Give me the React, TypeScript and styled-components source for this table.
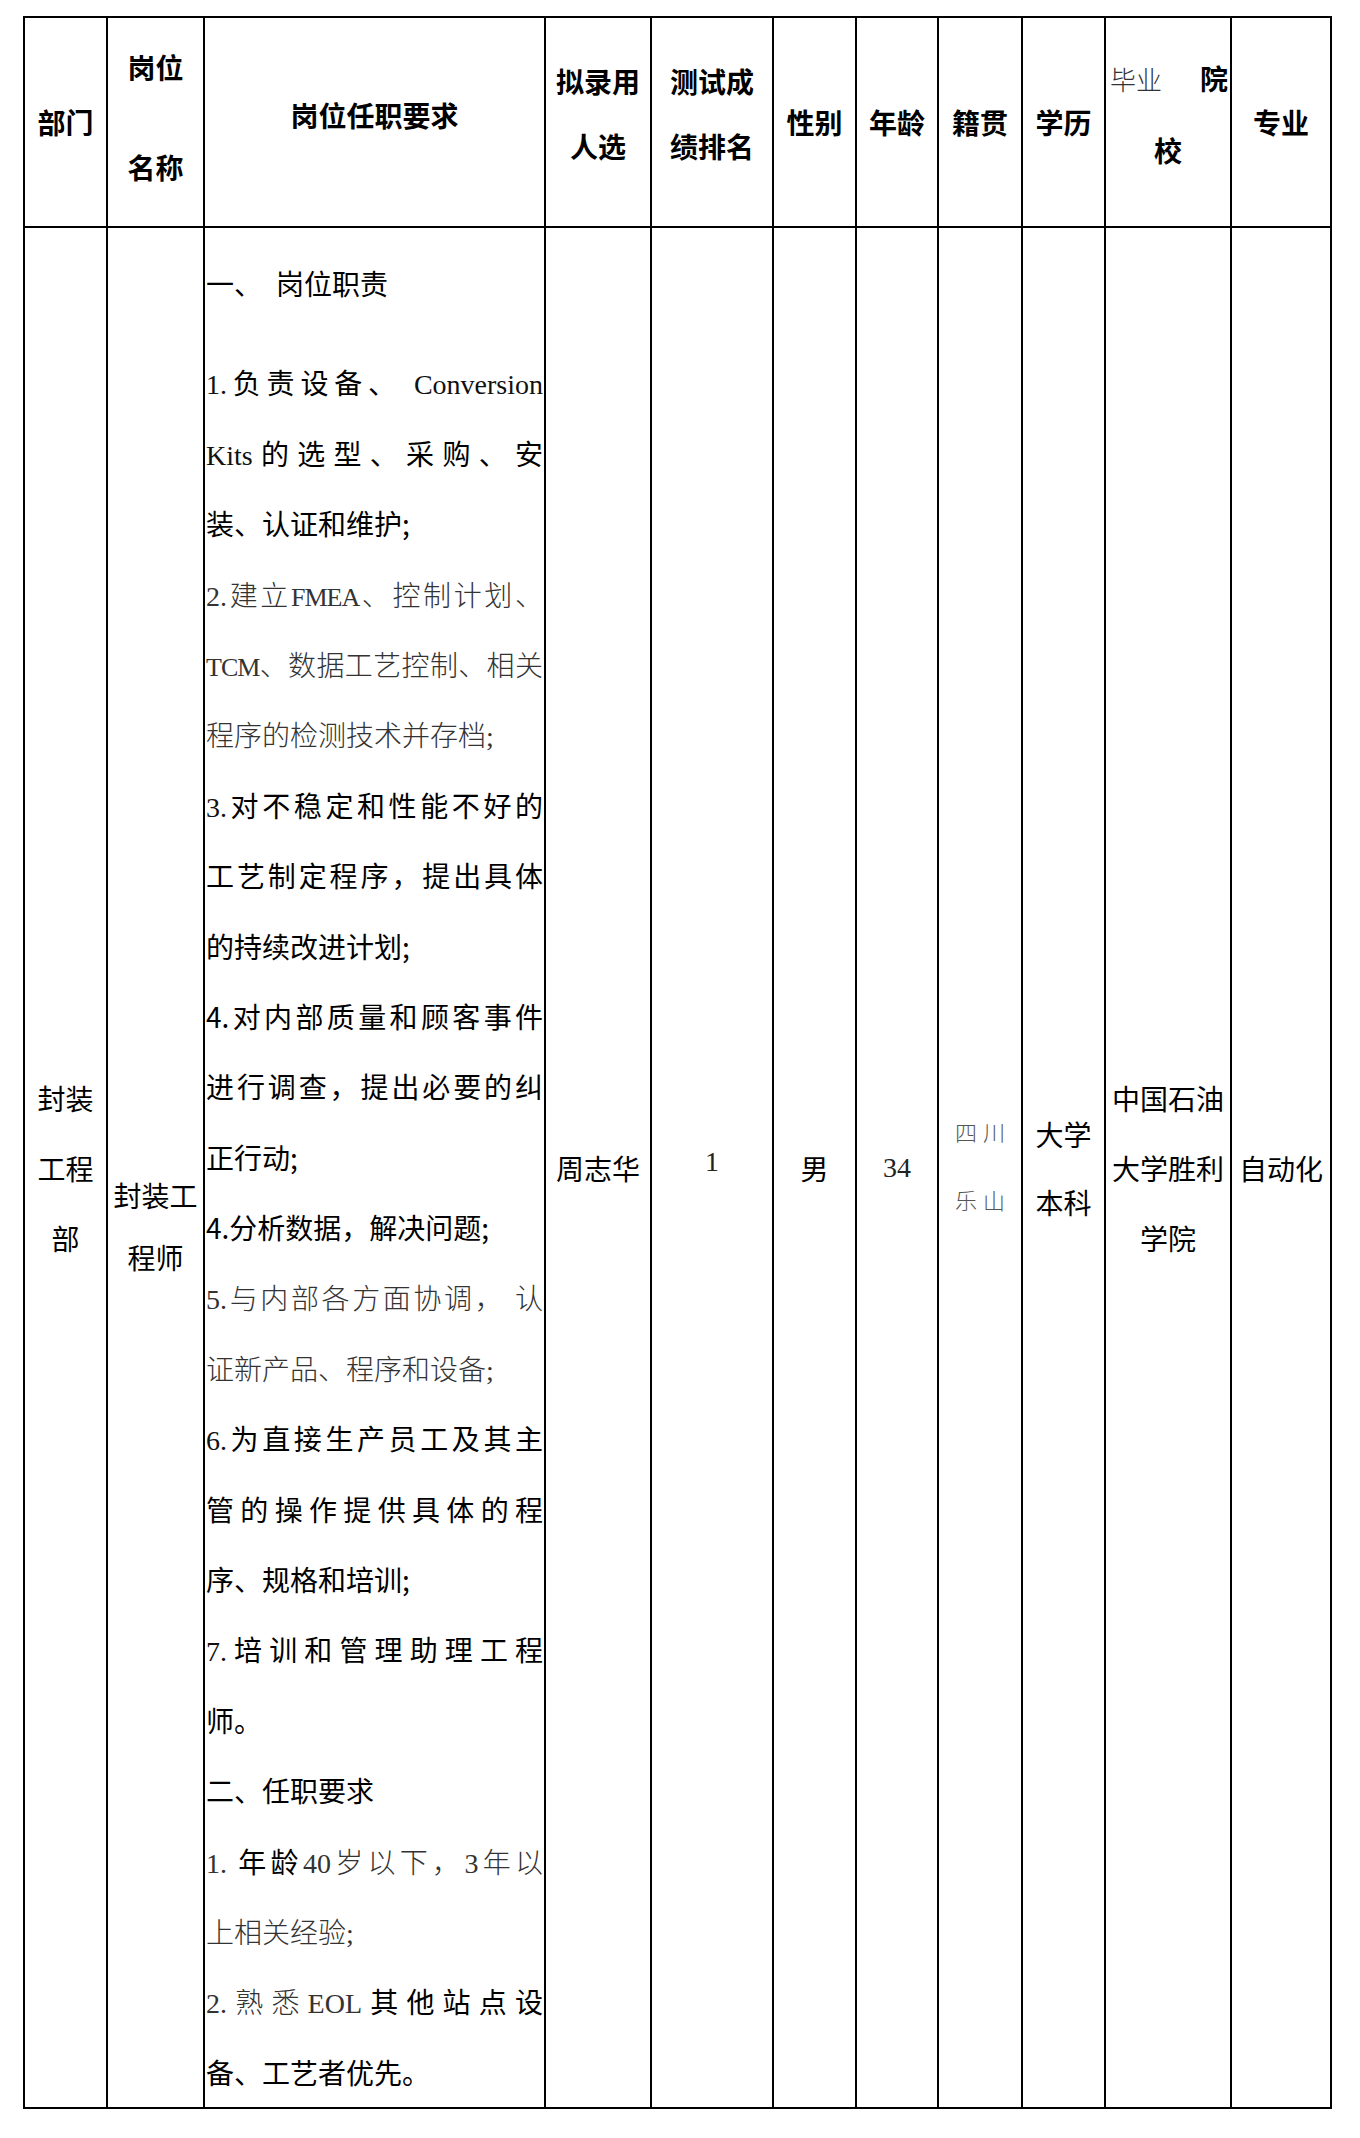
import React from 'react';
import styled, { createGlobalStyle } from 'styled-components';

const GlobalStyle = createGlobalStyle`
  html, body { margin: 0; padding: 0; background: #fff; }
  body {
    font-family: "Noto Sans CJK SC", "Noto Sans", sans-serif;
    color: #000;
  }
`;

const Page = styled.div`
  width: 1360px;
  min-height: 2138px;
  box-sizing: border-box;
  padding: 16px 0 0 23px;
`;

const Table = styled.div`
  display: grid;
  grid-template-columns: 81px 95px 339px 104px 120px 81px 80px 82px 81px 124px 98px;
  grid-template-rows: 208px 1879px;
  gap: 2px;
  padding: 2px;
  background: #000;
  width: max-content;
`;

const Cell = styled.div<{ $lh?: number; $offset?: number }>`
  background: #fff;
  display: flex;
  flex-direction: column;
  align-items: center;
  justify-content: center;
  box-sizing: border-box;
  font-size: 28px;
  line-height: ${(p) => p.$lh ?? 70}px;
  padding-top: ${(p) => (p.$offset && p.$offset > 0 ? p.$offset : 0)}px;
  padding-bottom: ${(p) => (p.$offset && p.$offset < 0 ? -p.$offset : 0)}px;
  white-space: nowrap;
`;

const HeadCell = styled(Cell)`
  font-weight: 700;
`;

const SchoolLine = styled.div`
  width: 100%;
  box-sizing: border-box;
  padding: 0 2px 0 4px;
  display: flex;
  justify-content: space-between;
  align-items: baseline;
`;

const SerifHead = styled.span`
  font-family: "Liberation Serif", "Noto Sans CJK SC", serif;
  font-weight: 300;
  font-size: 26px;
  color: #333;
`;

const Desc = styled.div`
  background: #fff;
  box-sizing: border-box;
  padding: 20px 1px 0 1px;
  font-size: 28px;
`;

const Line = styled.div<{ $just?: boolean; $gapAfter?: number }>`
  height: 70.4px;
  line-height: 70.4px;
  white-space: nowrap;
  text-align: ${(p) => (p.$just ? 'justify' : 'left')};
  text-align-last: ${(p) => (p.$just ? 'justify' : 'left')};
  text-justify: inter-character;
  margin-bottom: ${(p) => p.$gapAfter ?? 0}px;
`;

const Serif = styled.span`
  font-family: "Liberation Serif", "Noto Sans CJK SC", serif;
  font-weight: 300;
  color: #333;
`;

const Digit = styled.span`
  font-family: "Liberation Serif", serif;
  color: #111;
`;

const Narrow = styled.span`
  font-family: "Liberation Serif", serif;
  font-size: 26px;
  letter-spacing: -1px;
  color: #333;
`;

const Gap = styled.span`
  display: inline-block;
  width: 14px;
`;

const Num = styled.span`
  font-family: "Liberation Serif", serif;
  color: #222;
`;

const Place = styled.div`
  font-family: "Liberation Serif", "Noto Sans CJK SC", serif;
  font-weight: 300;
  font-size: 22px;
  letter-spacing: 6px;
  padding-left: 6px;
  color: #555;
`;

type Kind = 's' | 'f' | 'd' | 'n' | 'gap';
type Seg = [string, Kind];
type LineData = { segs: Seg[]; just?: boolean; gapAfter?: number };

const lines: LineData[] = [
  { segs: [['一、', 's'], ['', 'gap'], ['岗位职责', 's']], gapAfter: 29 },
  { segs: [['1.', 'd'], ['负责设备、 ', 's'], ['Conversion', 'd']], just: true },
  { segs: [['Kits', 'd'], ['的选型、采购、安', 's']], just: true },
  { segs: [['装、认证和维护;', 's']] },
  { segs: [['2.建立', 'f'], ['FMEA', 'n'], ['、控制计划、', 'f']], just: true },
  { segs: [['TCM', 'n'], ['、数据工艺控制、相关', 'f']], just: true },
  { segs: [['程序的检测技术并存档;', 'f']] },
  { segs: [['3.', 'd'], ['对不稳定和性能不好的', 's']], just: true },
  { segs: [['工艺制定程序，提出具体', 's']], just: true },
  { segs: [['的持续改进计划;', 's']] },
  { segs: [['4.对内部质量和顾客事件', 's']], just: true },
  { segs: [['进行调查，提出必要的纠', 's']], just: true },
  { segs: [['正行动;', 's']] },
  { segs: [['4.分析数据，解决问题;', 's']] },
  { segs: [['5.与内部各方面协调， 认', 'f']], just: true },
  { segs: [['证新产品、程序和设备;', 'f']] },
  { segs: [['6.', 'd'], ['为直接生产员工及其主', 's']], just: true },
  { segs: [['管的操作提供具体的程', 's']], just: true },
  { segs: [['序、规格和培训;', 's']] },
  { segs: [['7.', 'd'], ['培训和管理助理工程', 's']], just: true },
  { segs: [['师。', 's']] },
  { segs: [['二、任职要求', 's']] },
  { segs: [['1. ', 'f'], ['年龄', 's'], ['40岁以下，3年以', 'f']], just: true },
  { segs: [['上相关经验;', 'f']] },
  { segs: [['2.熟悉', 'f'], ['EOL', 'f'], ['其他站点设', 's']], just: true },
  { segs: [['备、工艺者优先。', 's']] },
];

const renderSeg = ([t, k]: Seg, i: number) => {
  switch (k) {
    case 'f':
      return <Serif key={i}>{t}</Serif>;
    case 'd':
      return <Digit key={i}>{t}</Digit>;
    case 'n':
      return <Narrow key={i}>{t}</Narrow>;
    case 'gap':
      return <Gap key={i} />;
    default:
      return <React.Fragment key={i}>{t}</React.Fragment>;
  }
};

export default function App() {
  return (
    <>
      <GlobalStyle />
      <Page lang="zh-CN">
        <Table>
          <HeadCell>部门</HeadCell>
          <HeadCell $lh={100} $offset={-10}>
            <div>岗位</div>
            <div>名称</div>
          </HeadCell>
          <HeadCell $offset={-14}>岗位任职要求</HeadCell>
          <HeadCell $lh={65} $offset={-17}>
            <div>拟录用</div>
            <div>人选</div>
          </HeadCell>
          <HeadCell $lh={65} $offset={-17}>
            <div>测试成</div>
            <div>绩排名</div>
          </HeadCell>
          <HeadCell>性别</HeadCell>
          <HeadCell>年龄</HeadCell>
          <HeadCell>籍贯</HeadCell>
          <HeadCell>学历</HeadCell>
          <HeadCell $lh={68} $offset={-16}>
            <SchoolLine>
              <SerifHead>毕业</SerifHead>
              <span>院</span>
            </SchoolLine>
            <div>校</div>
          </HeadCell>
          <HeadCell>专业</HeadCell>

          <Cell $lh={70}>
            <div>封装</div>
            <div>工程</div>
            <div>部</div>
          </Cell>
          <Cell $lh={62} $offset={117}>
            <div>封装工</div>
            <div>程师</div>
          </Cell>
          <Desc>
            {lines.map((l, i) => (
              <Line key={i} $just={l.just} $gapAfter={l.gapAfter}>
                {l.segs.map(renderSeg)}
              </Line>
            ))}
          </Desc>
          <Cell>周志华</Cell>
          <Cell $offset={-12}>
            <Num>1</Num>
          </Cell>
          <Cell>男</Cell>
          <Cell>
            <Num>34</Num>
          </Cell>
          <Cell $lh={68}>
            <Place>四川</Place>
            <Place>乐山</Place>
          </Cell>
          <Cell $lh={68}>
            <div>大学</div>
            <div>本科</div>
          </Cell>
          <Cell $lh={70}>
            <div>中国石油</div>
            <div>大学胜利</div>
            <div>学院</div>
          </Cell>
          <Cell>自动化</Cell>
        </Table>
      </Page>
    </>
  );
}
